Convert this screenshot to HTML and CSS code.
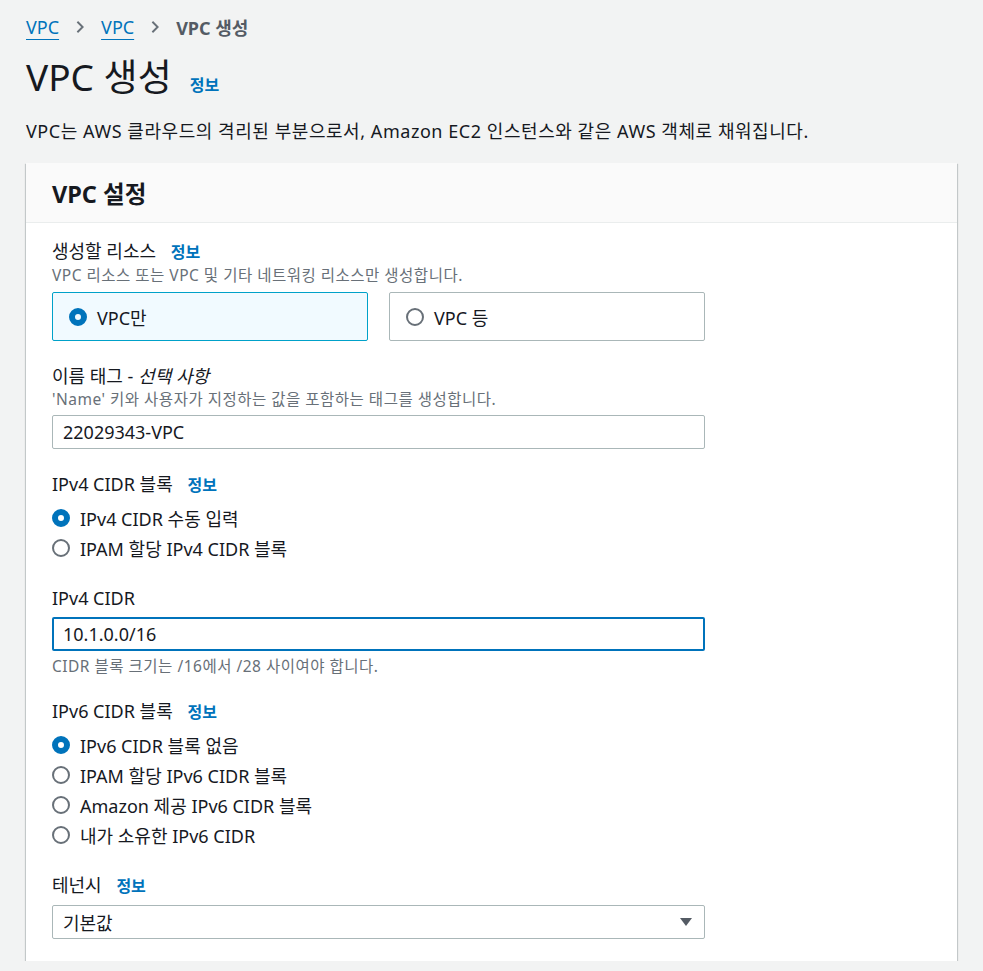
FILE: index.html
```html
<!DOCTYPE html>
<html lang="ko">
<head>
    <meta charset="UTF-8">
    <title>VPC 생성</title>
    <link rel="stylesheet" href="styles.css">
</head>
<body>

    <nav class="breadcrumbs">
        <a href="#">VPC</a>
        <span class="sep">
            <svg width="14" height="14" viewBox="0 0 16 16"><path d="M5 2l6 6-6 6" fill="none" stroke="currentColor" stroke-width="2.2"/></svg>
        </span>
        <a href="#">VPC</a>
        <span class="sep">
            <svg width="14" height="14" viewBox="0 0 16 16"><path d="M5 2l6 6-6 6" fill="none" stroke="currentColor" stroke-width="2.2"/></svg>
        </span>
        <span class="current">VPC 생성</span>
    </nav>

    <header class="page-header">
        <h1>VPC 생성</h1>
        <a class="info" href="#">정보</a>
    </header>
    <p class="page-desc">VPC는 AWS 클라우드의 격리된 부분으로서, Amazon EC2 인스턴스와 같은 AWS 객체로 채워집니다.</p>

    <section class="card">
        <div class="card-header">
            <h2>VPC 설정</h2>
        </div>
        <div class="card-body">

            <div class="field">
                <div class="label">생성할 리소스 <a class="info" href="#">정보</a></div>
                <div class="desc">VPC 리소스 또는 VPC 및 기타 네트워킹 리소스만 생성합니다.</div>
                <div class="tiles">
                    <div class="tile selected"><span class="radio checked"></span>VPC만</div>
                    <div class="tile"><span class="radio"></span>VPC 등</div>
                </div>
            </div>

            <div class="field">
                <div class="label">이름 태그 - <em>선택 사항</em></div>
                <div class="desc">'Name' 키와 사용자가 지정하는 값을 포함하는 태그를 생성합니다.</div>
                <div class="input">22029343-VPC</div>
            </div>

            <div class="field">
                <div class="label">IPv4 CIDR 블록 <a class="info" href="#">정보</a></div>
                <div class="radios">
                    <div class="opt"><span class="radio checked"></span>IPv4 CIDR 수동 입력</div>
                    <div class="opt"><span class="radio"></span>IPAM 할당 IPv4 CIDR 블록</div>
                </div>
            </div>

            <div class="field">
                <div class="label">IPv4 CIDR</div>
                <div class="input focused">10.1.0.0/16</div>
                <div class="hint">CIDR 블록 크기는 /16에서 /28 사이여야 합니다.</div>
            </div>

            <div class="field">
                <div class="label">IPv6 CIDR 블록 <a class="info" href="#">정보</a></div>
                <div class="radios">
                    <div class="opt"><span class="radio checked"></span>IPv6 CIDR 블록 없음</div>
                    <div class="opt"><span class="radio"></span>IPAM 할당 IPv6 CIDR 블록</div>
                    <div class="opt"><span class="radio"></span>Amazon 제공 IPv6 CIDR 블록</div>
                    <div class="opt"><span class="radio"></span>내가 소유한 IPv6 CIDR</div>
                </div>
            </div>

            <div class="field">
                <div class="label">테넌시 <a class="info" href="#">정보</a></div>
                <div class="input select">
                    <span>기본값</span>
                    <svg width="16" height="16" viewBox="0 0 16 16"><path d="M2 4h12l-6 8z" fill="#545b64"/></svg>
                </div>
            </div>

        </div>
    </section>

</body>
</html>
```

FILE: styles.css
```css
body {
    margin: 0;
    padding: 13px 26px 0 26px;
    background-color: #f2f3f3;
    font-family: "Noto Sans", "Noto Sans CJK KR", sans-serif;
    font-size: 18px;
    color: #16191f;
}
a {
    text-decoration: none;
}
.breadcrumbs {
    display: flex;
    align-items: center;
    gap: 14px;
    height: 28px;
}
.breadcrumbs a {
    color: #0073bb;
    text-decoration: underline;
    text-underline-offset: 5px;
    text-decoration-thickness: 1px;
}
.breadcrumbs .sep {
    color: #687078;
    display: flex;
}
.breadcrumbs .current {
    color: #545b64;
    font-weight: bold;
}
.page-header {
    display: flex;
    align-items: baseline;
    gap: 18px;
    margin-top: 14px;
}
.page-header h1 {
    margin: 0;
    font-size: 37px;
    font-weight: normal;
    line-height: 44px;
}
.info {
    color: #0073bb;
    font-size: 16px;
    font-weight: bold;
}
.page-desc {
    margin: 20px 0 0 0;
    line-height: 24px;
    letter-spacing: 0.55px;
}
.card {
    width: 931px;
    margin-top: 20px;
    background: #fff;
    box-shadow: 0 1px 1px 0 rgba(0, 28, 36, 0.3), 1px 1px 1px 0 rgba(0, 28, 36, 0.15), -1px 1px 1px 0 rgba(0, 28, 36, 0.15);
}
.card-header {
    background: #fafafa;
    border-bottom: 1px solid #eaeded;
    height: 59px;
    padding: 0 26px;
    display: flex;
    align-items: center;
}
.card-header h2 {
    margin: 0;
    font-size: 23.5px;
    font-weight: bold;
}
.card-body {
    padding: 15px 26px 22px 26px;
    width: 653px;
    display: flex;
    flex-direction: column;
    gap: 22px;
}
.label {
    line-height: 26px;
}
.label .info {
    margin-left: 10px;
}
.label em {
    font-style: italic;
}
.desc, .hint {
    font-size: 15.5px;
    color: #687078;
    line-height: 20px;
    letter-spacing: 0.5px;
}
.hint {
    margin-top: 5px;
}
.tiles {
    display: flex;
    gap: 21px;
    margin-top: 7px;
}
.tile {
    flex: 1;
    height: 47px;
    border: 1px solid #aab7b8;
    border-radius: 2px;
    display: flex;
    align-items: center;
    padding-left: 16px;
    gap: 10px;
}
.tile.selected {
    background: #f1faff;
    border-color: #00a1c9;
}
.radio {
    width: 14px;
    height: 14px;
    border: 2px solid #687078;
    border-radius: 50%;
    box-sizing: content-box;
    flex-shrink: 0;
}
.radio.checked {
    width: 6px;
    height: 6px;
    border: 6px solid #0073bb;
}
.input {
    margin-top: 6px;
    height: 32px;
    border: 1px solid #aab7b8;
    border-radius: 2px;
    display: flex;
    align-items: center;
    padding: 0 10px;
}
.label + .input {
    margin-top: 6px;
}
.input.focused {
    border: 2px solid #0073bb;
    height: 30px;
    padding: 0 9px;
}
.select {
    justify-content: space-between;
}
.radios {
    display: flex;
    flex-direction: column;
    margin-top: 5px;
}
.opt {
    display: flex;
    align-items: center;
    gap: 10px;
    height: 30px;
}
```
